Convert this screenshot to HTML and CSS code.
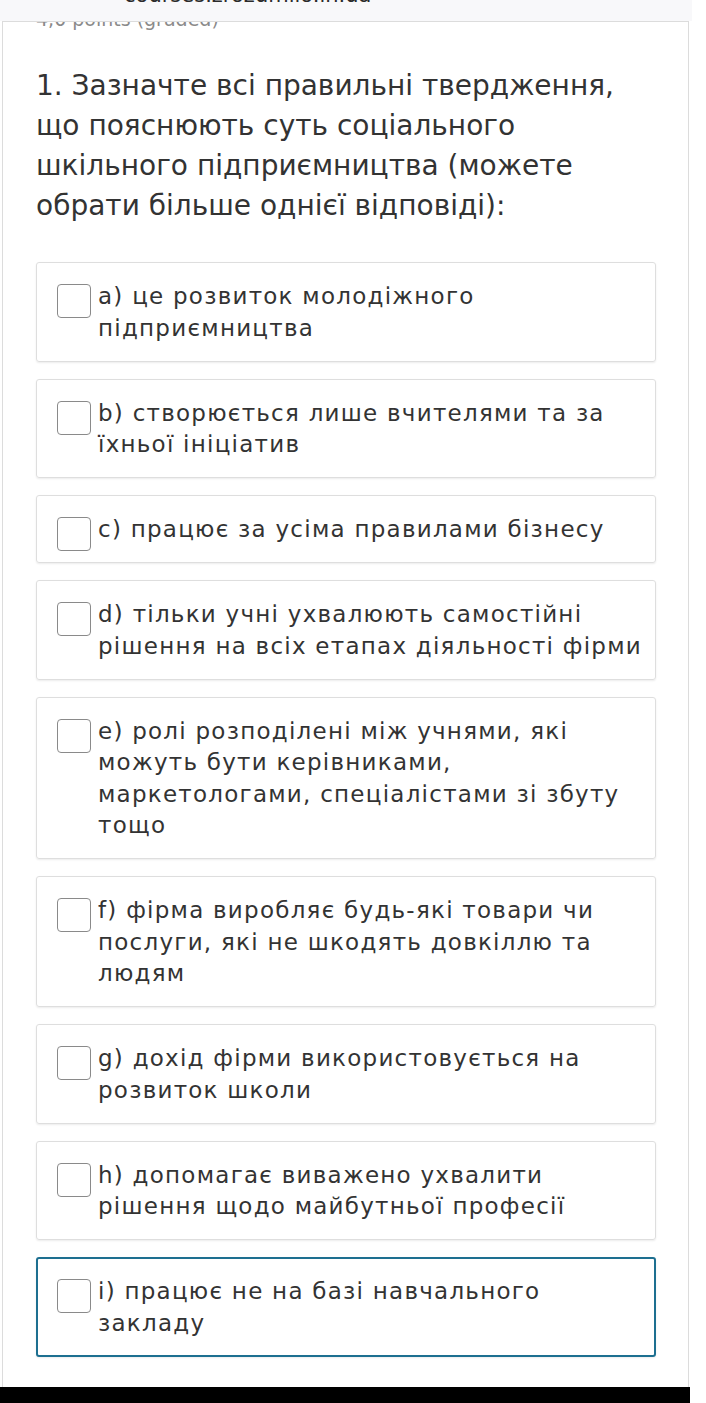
FILE: index.html
```html
<!DOCTYPE html>
<html lang="uk">
<head>
<meta charset="utf-8">
<title>Питання</title>
<link rel="stylesheet" href="styles.css">
</head>
<body>
<div class="page">
  <header class="topbar"><div class="clip url-clip"><span class="url">courses.zrozumilo.in.ua</span></div></header>
  <main class="card">
    <div class="clip points-clip"><span class="points">4,0 points (graded)</span></div>
    <h2 class="question">1. Зазначте всі правильні твердження, що пояснюють суть соціального шкільного підприємництва (можете обрати більше однієї відповіді):</h2>
    <div class="options">
      <label class="option"><span class="box"></span><span class="text">а) це розвиток молодіжного підприємництва</span></label>
      <label class="option"><span class="box"></span><span class="text">b) створюється лише вчителями та за їхньої ініціатив</span></label>
      <label class="option"><span class="box"></span><span class="text">c) працює за усіма правилами бізнесу</span></label>
      <label class="option"><span class="box"></span><span class="text">d) тільки учні ухвалюють самостійні рішення на всіх етапах діяльності фірми</span></label>
      <label class="option"><span class="box"></span><span class="text">e) ролі розподілені між учнями, які можуть бути керівниками, маркетологами,&nbsp;спеціалістами зі збуту тощо</span></label>
      <label class="option"><span class="box"></span><span class="text">f) фірма виробляє будь-які товари чи послуги, які не шкодять довкіллю та людям</span></label>
      <label class="option"><span class="box"></span><span class="text">g) дохід фірми використовується на розвиток школи</span></label>
      <label class="option"><span class="box"></span><span class="text">h) допомагає виважено ухвалити рішення щодо майбутньої професії</span></label>
      <label class="option focused"><span class="box"></span><span class="text">і) працює не на базі навчального закладу</span></label>
    </div>
  </main>
  <div class="bottombar"></div>
</div>
</body>
</html>
```

FILE: styles.css
```css
html, body {
  margin: 0;
  padding: 0;
  background: #ffffff;
}
body {
  font-family: "DejaVu Sans", "Open Sans", sans-serif;
  color: #333333;
}
.page {
  width: 706px;
  height: 1403px;
  overflow: hidden;
}
.clip {
  display: flex;
  align-items: flex-end;
  overflow: hidden;
}
.topbar {
  width: 692px;
  height: 21px;
  background: #f8f8fa;
}
.url-clip {
  height: 7px;
  padding-left: 124px;
}
.url {
  flex: none;
  font-size: 21px;
  line-height: 24px;
  color: #2b2b2b;
  white-space: nowrap;
}
.card {
  width: 687px;
  margin-left: 2px;
  box-sizing: border-box;
  border: 1px solid #dcdcdc;
  border-bottom: none;
  height: 1382px;
  overflow: hidden;
  padding: 0 32px 0 33px;
}
.points-clip {
  height: 9px;
}
.points {
  flex: none;
  font-size: 19px;
  line-height: 24px;
  color: #8a8a8a;
  white-space: nowrap;
}
.question {
  margin: 35px 0 0 0;
  font-weight: 400;
  font-size: 28px;
  line-height: 40px;
  color: #333333;
}
.options {
  margin-top: 36px;
  display: flex;
  flex-direction: column;
  gap: 17px;
}
.option {
  display: flex;
  align-items: flex-start;
  gap: 7px;
  border: 1px solid #dedede;
  border-radius: 3px;
  box-shadow: 0 1px 2px rgba(0, 0, 0, 0.08);
  padding: 18px 10px 16.5px 20px;
  font-size: 23px;
  line-height: 31.5px;
  letter-spacing: 1.25px;
  color: #333333;
}
.option.focused {
  border: 2px solid #1d6f90;
  padding: 17px 9px 15.5px 19px;
}
.box {
  flex: none;
  width: 34px;
  height: 34px;
  margin-top: 3px;
  margin-bottom: -5.5px;
  border: 1.5px solid #8a8a8a;
  border-radius: 4px;
  box-sizing: border-box;
}
.bottombar {
  position: fixed;
  left: 0;
  bottom: 0;
  width: 690px;
  height: 16px;
  background: #000000;
}
```
